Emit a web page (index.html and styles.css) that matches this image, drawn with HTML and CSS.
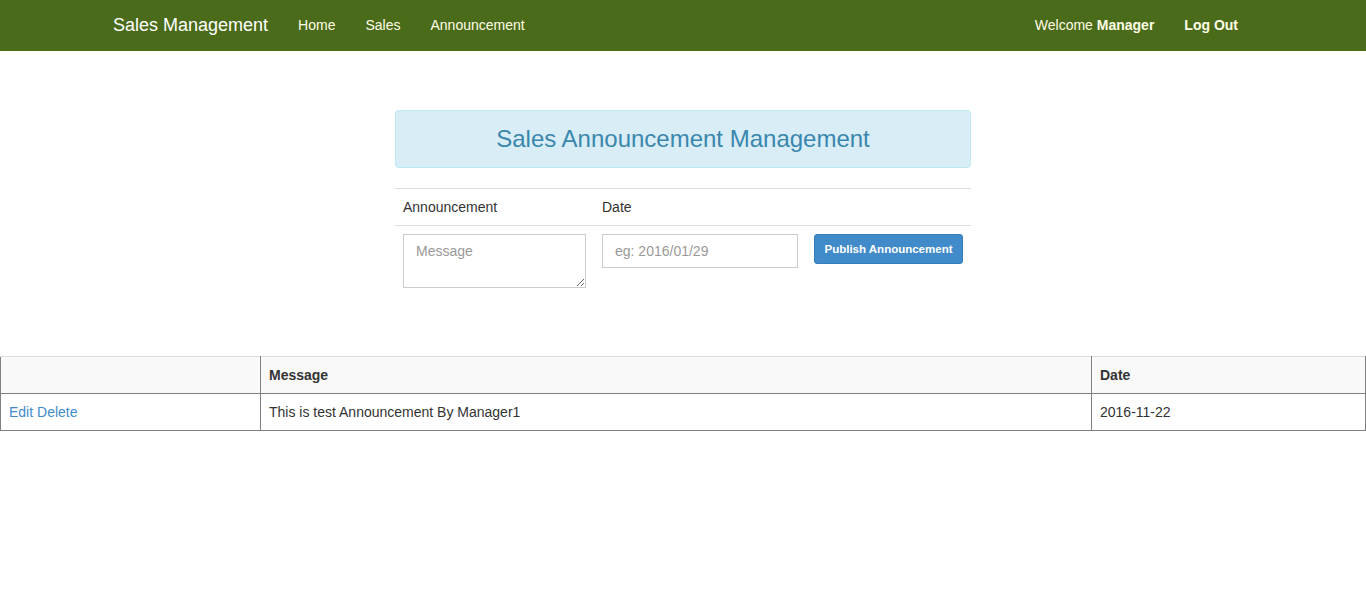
FILE: index.html
```html
<!DOCTYPE html>
<html>
<head>
<meta charset="utf-8">
<link rel="stylesheet" href="styles.css">
</head>
<body>
<nav class="navbar">
  <div class="container nav-inner">
    <div class="nav-left">
      <a class="brand">Sales Management</a>
      <a class="nav-link">Home</a>
      <a class="nav-link">Sales</a>
      <a class="nav-link">Announcement</a>
    </div>
    <div class="nav-right">
      <span class="nav-link">Welcome <b>Manager</b></span>
      <a class="nav-link bold">Log Out</a>
    </div>
  </div>
</nav>
<main class="panel">
  <div class="alert">Sales Announcement Management</div>
  <table class="form-table">
    <tr>
      <th class="c1">Announcement</th>
      <th class="c2">Date</th>
      <th class="c3"></th>
    </tr>
    <tr>
      <td><textarea class="textarea" placeholder="Message"></textarea></td>
      <td><input class="input" type="text" placeholder="eg: 2016/01/29"></td>
      <td><button class="btn">Publish Announcement</button></td>
    </tr>
  </table>
</main>
<table class="list">
  <thead>
    <tr>
      <th class="l1"></th>
      <th class="l2">Message</th>
      <th class="l3">Date</th>
    </tr>
  </thead>
  <tbody>
    <tr>
      <td><a class="link">Edit</a> <a class="link">Delete</a></td>
      <td>This is test Announcement By Manager1</td>
      <td>2016-11-22</td>
    </tr>
  </tbody>
</table>
</body>
</html>
```
FILE: styles.css
```css
* { box-sizing: border-box; }
body {
  margin: 0;
  font-family: "Liberation Sans", Arial, sans-serif;
  font-size: 14px;
  line-height: 1.42857;
  color: #333;
  background: #fff;
}
.navbar {
  background: #4a6b1a;
  height: 51px;
  border-bottom: 1px solid #4a6b1a;
}
.container {
  width: 1170px;
  margin: 0 auto;
  padding: 0 15px;
}
.nav-inner {
  display: flex;
  justify-content: space-between;
  align-items: center;
  height: 50px;
}
.nav-left, .nav-right {
  display: flex;
  align-items: center;
}
.brand {
  color: #fff;
  font-size: 18px;
  line-height: 20px;
  padding: 15px 15px 15px 0;
}
.nav-link {
  color: #fffde6;
  padding: 15px;
  line-height: 20px;
}
.nav-link b, .bold { font-weight: bold; }

.panel {
  width: 576px;
  margin: 59px auto 0;
}
.alert {
  background: #d9edf7;
  border: 1px solid #bce8f1;
  border-radius: 4px;
  color: #3a87ad;
  font-size: 24px;
  line-height: 26px;
  text-align: center;
  padding: 15px;
  height: 58px;
}
.form-table {
  margin-top: 20px;
  width: 576px;
  border-collapse: collapse;
}
.form-table th {
  font-weight: normal;
  text-align: left;
  padding: 8px;
  line-height: 20px;
  border-top: 1px solid #ddd;
  vertical-align: top;
}
.form-table td {
  padding: 8px;
  border-top: 1px solid #ddd;
  vertical-align: top;
}
.c1 { width: 199px; }
.c2 { width: 212px; }
.textarea {
  display: block;
  width: 183px;
  height: 54px;
  border: 1px solid #ccc;
  padding: 6px 12px;
  font-family: inherit;
  font-size: 14px;
  line-height: 20px;
  resize: vertical;
  color: #555;
}
.input {
  display: block;
  width: 196px;
  height: 34px;
  border: 1px solid #ccc;
  padding: 6px 12px;
  font-family: inherit;
  font-size: 14px;
  color: #555;
}
::placeholder { color: #999; }
.btn {
  display: block;
  width: 149px;
  height: 30px;
  background: #428bca;
  border: 1px solid #357ebd;
  border-radius: 3px;
  color: #fff;
  font-family: inherit;
  font-size: 11.5px;
  font-weight: bold;
  padding: 0;
}
.list {
  margin-top: 60px;
  width: 1366px;
  border-collapse: collapse;
}
.list th, .list td {
  border: 1px solid #808080;
  padding: 8px;
  line-height: 20px;
  text-align: left;
  height: 37px;
}
.list thead th {
  background: #f9f9f9;
  border-top: 1px solid #ddd;
  font-weight: bold;
}
.l1 { width: 260px; }
.l3 { width: 274px; }
.link { color: #428bca; }
```
